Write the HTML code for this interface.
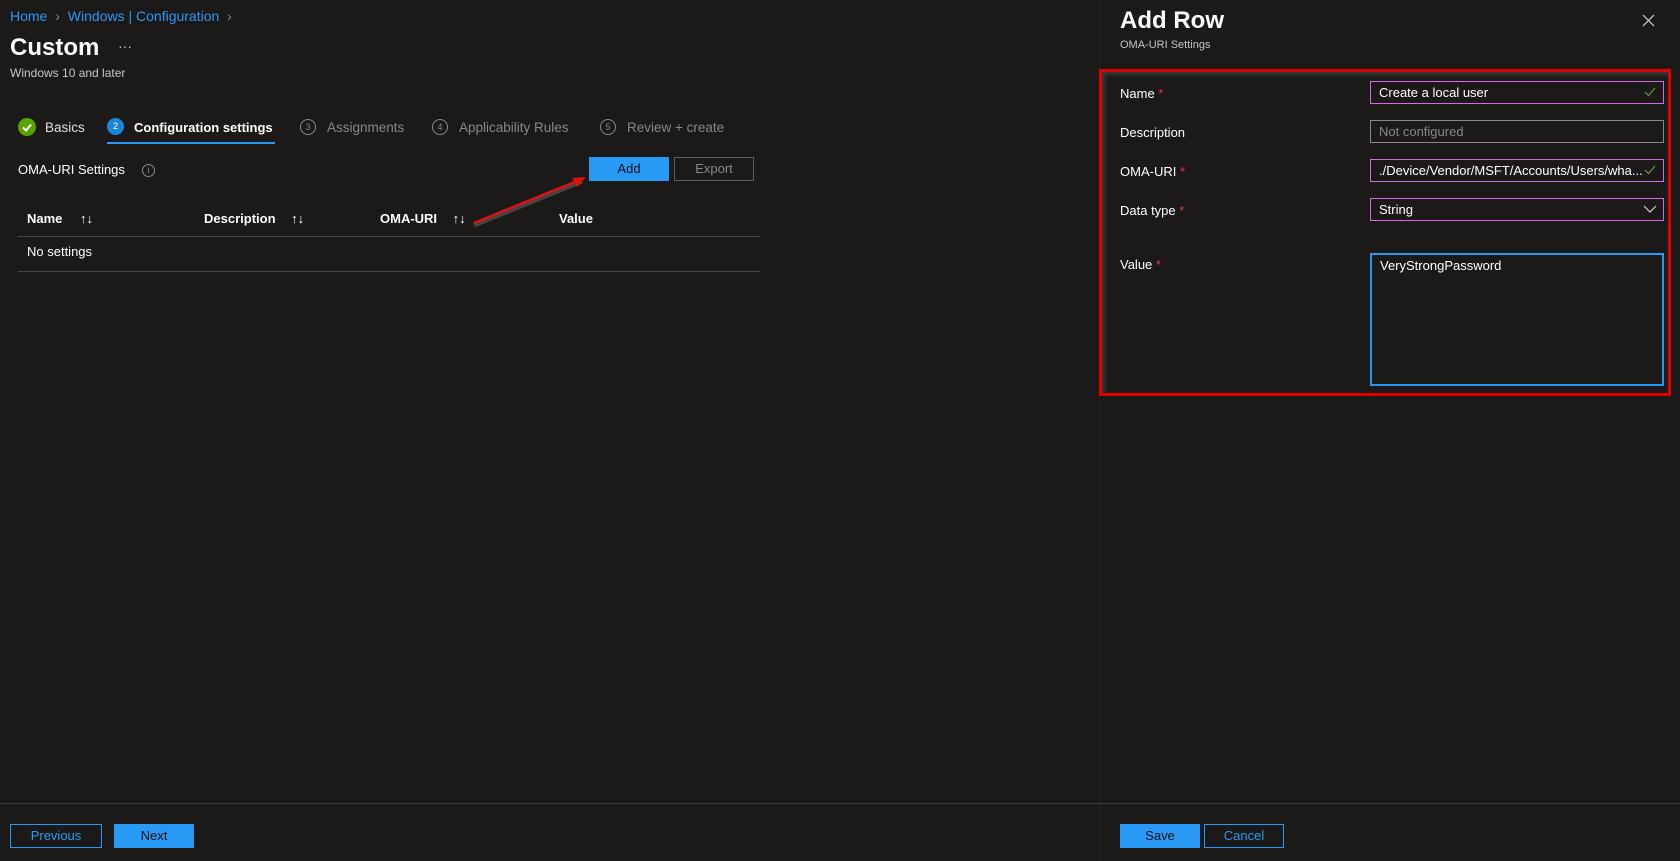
<!DOCTYPE html>
<html><head><meta charset="utf-8"><style>
*{margin:0;padding:0;box-sizing:border-box}
body{width:1680px;height:861px;background:#1b1a19;font-family:"Liberation Sans",sans-serif;color:#fff;font-size:13px;position:relative;overflow:hidden}
.a{position:absolute;white-space:nowrap}
.blue{color:#2899f5}
.gray{color:#8a8886}
.btn{position:absolute;height:24px;line-height:24px;text-align:center;font-size:13px}
.bd{line-height:22px}
.inp{position:absolute;left:1370px;width:294px;height:23px;border:1px solid #d06ee0;padding-left:8px;line-height:21px;font-size:13px}
.req{color:#e0364f}
.num{position:absolute;width:16px;height:16px;border:1px solid #8a8886;border-radius:50%;font-size:9px;line-height:14px;text-align:center;color:#8a8886}
.tab{position:absolute;top:120px;font-size:13.5px;color:#8a8886;white-space:nowrap}
.chk{position:absolute;right:6px;top:3px}
</style></head><body>
<div class="a blue" style="left:10px;top:8px;font-size:14px">Home <span class="gray" style="margin:0 4px">›</span> Windows | Configuration <span class="gray" style="margin-left:4px">›</span></div>
<div class="a" style="left:10px;top:34px;font-size:24px;font-weight:bold">Custom</div>
<div class="a" style="left:118px;top:38px;font-size:14px;color:#c8c6c4">···</div>
<div class="a" style="left:10px;top:66px;font-size:12px;color:#c8c6c4">Windows 10 and later</div>

<div class="a" style="left:18px;top:118px;width:18px;height:18px;border-radius:50%;background:#57a300"></div>
<svg class="a" style="left:18px;top:118px" width="18" height="18"><path d="M5 9.5l3 3 5-6" stroke="#fff" stroke-width="2" fill="none"/></svg>
<div class="tab" style="left:45px;color:#e1dfdd">Basics</div>
<div class="a" style="left:107px;top:118px;width:17px;height:17px;border-radius:50%;background:#1a86d9;font-size:9px;text-align:center;line-height:17px">2</div>
<div class="tab" style="left:134px;color:#fff;font-weight:bold;font-size:13px;top:120px">Configuration settings</div>
<div class="a" style="left:107px;top:142px;width:168px;height:2px;background:#2899f5"></div>
<div class="num" style="left:300px;top:119px">3</div><div class="tab" style="left:327px">Assignments</div>
<div class="num" style="left:432px;top:119px">4</div><div class="tab" style="left:459px">Applicability Rules</div>
<div class="num" style="left:600px;top:119px">5</div><div class="tab" style="left:627px">Review + create</div>

<div class="a" style="left:18px;top:162px;font-size:13px">OMA-URI Settings</div>
<div class="num" style="left:142px;top:164px;width:13px;height:13px;line-height:11px">i</div>
<div class="btn" style="left:589px;top:157px;width:80px;background:#2899f5;color:#111">Add</div>
<div class="btn bd" style="left:674px;top:157px;width:80px;border:1px solid #605e5c;color:#8a8886">Export</div>
<svg class="a" style="left:470px;top:175px" width="125" height="55"><line x1="4" y1="50" x2="112" y2="6" stroke="#444" stroke-width="5"/><line x1="4" y1="48" x2="112" y2="4" stroke="#e01010" stroke-width="2.5"/><path d="M116 2l-14 1 5 9z" fill="#e01010"/></svg>

<div class="a" style="left:27px;top:211px;font-size:13px;font-weight:bold">Name <span style="font-weight:normal;margin-left:14px">↑↓</span></div>
<div class="a" style="left:204px;top:211px;font-size:13px;font-weight:bold">Description <span style="font-weight:normal;margin-left:12px">↑↓</span></div>
<div class="a" style="left:380px;top:211px;font-size:13px;font-weight:bold">OMA-URI <span style="font-weight:normal;margin-left:12px">↑↓</span></div>
<div class="a" style="left:559px;top:211px;font-size:13px;font-weight:bold">Value</div>
<div class="a" style="left:18px;top:236px;width:742px;height:1px;background:#484644"></div>
<div class="a" style="left:27px;top:244px;font-size:13px">No settings</div>
<div class="a" style="left:18px;top:271px;width:742px;height:1px;background:#484644"></div>

<div class="a" style="left:1099px;top:0;width:1px;height:861px;background:#232221"></div>
<div class="a" style="left:0;top:803px;width:1680px;height:1px;background:#3b3a39"></div>
<div class="btn bd" style="left:10px;top:824px;width:92px;border:1px solid #2899f5;color:#2899f5">Previous</div>
<div class="btn" style="left:114px;top:824px;width:80px;background:#2899f5;color:#111">Next</div>
<div class="btn" style="left:1120px;top:824px;width:80px;background:#2899f5;color:#111">Save</div>
<div class="btn bd" style="left:1204px;top:824px;width:80px;border:1px solid #2899f5;color:#2899f5">Cancel</div>

<div class="a" style="left:1120px;top:7px;font-size:24px;font-weight:bold">Add Row</div>
<div class="a" style="left:1120px;top:39px;font-size:11px;color:#c8c6c4">OMA-URI Settings</div>
<svg class="a" style="left:1642px;top:14px" width="13" height="13"><path d="M1 1l11 11M12 1L1 12" stroke="#d0d0d0" stroke-width="1.2"/></svg>

<div class="a" style="left:1099px;top:69px;width:572px;height:327px;border:3px solid #e00000;box-shadow:inset 3px 3px 4px #3a3a3a"></div>
<div class="a" style="left:1120px;top:86px">Name <span class="req">*</span></div>
<div class="a" style="left:1120px;top:125px">Description</div>
<div class="a" style="left:1120px;top:164px">OMA-URI <span class="req">*</span></div>
<div class="a" style="left:1120px;top:203px">Data type <span class="req">*</span></div>
<div class="a" style="left:1120px;top:257px">Value <span class="req">*</span></div>
<div class="inp" style="top:81px">Create a local user<svg class="chk" width="14" height="14"><path d="M2 7l3.5 3.5L12 3" stroke="#6a9a3a" stroke-width="1.2" fill="none"/></svg></div>
<div class="inp" style="top:120px;border-color:#8a8886;color:#8a8886">Not configured</div>
<div class="inp" style="top:159px">./Device/Vendor/MSFT/Accounts/Users/wha...<svg class="chk" width="14" height="14"><path d="M2 7l3.5 3.5L12 3" stroke="#6a9a3a" stroke-width="1.2" fill="none"/></svg></div>
<div class="inp" style="top:198px">String<svg class="chk" style="top:5px" width="14" height="10"><path d="M1 2l6 6 6-6" stroke="#d0d0d0" stroke-width="1.2" fill="none"/></svg></div>
<div class="inp" style="top:253px;height:133px;border:2px solid #2899f5;padding-top:2px;line-height:18px">VeryStrongPassword</div>
</body></html>
